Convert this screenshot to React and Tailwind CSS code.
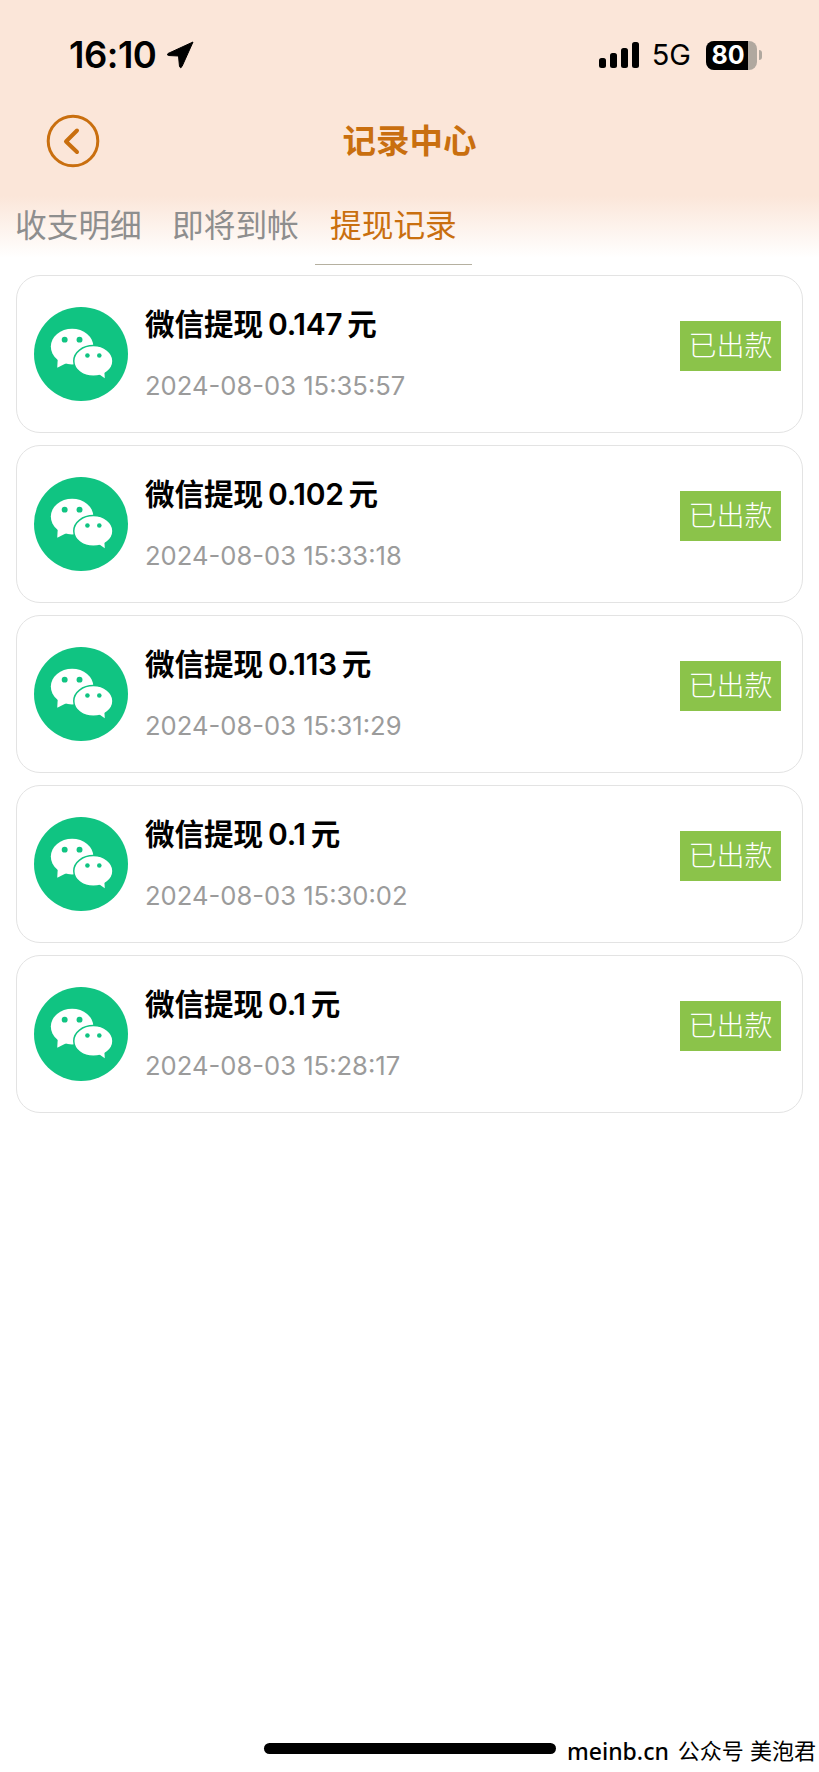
const CJK = '"Inter","Noto Sans CJK SC",sans-serif';

function WeChat() {
  return (
    <svg viewBox="0 0 95 95" className="w-[94px] h-[94px] shrink-0">
      <circle cx="47.500" cy="47.500" r="47.500" fill="#10c482" />
      <ellipse cx="38.500" cy="40" rx="21.500" ry="18" fill="#fff" />
      <path d="M24 52 L23.500 61.500 L34 56 Z" fill="#fff" />
      <ellipse cx="60" cy="54.500" rx="19.800" ry="15.500" fill="#fff" stroke="#10c482" strokeWidth="1.500" />
      <path d="M63 66 L71.500 72 L71 63 Z" fill="#fff" />
      <circle cx="31" cy="33" r="3" fill="#10c482" />
      <circle cx="46" cy="33" r="3" fill="#10c482" />
      <circle cx="54" cy="49" r="2.300" fill="#10c482" />
      <circle cx="66" cy="49" r="2.300" fill="#10c482" />
    </svg>
  );
}

function Row({ amount, time }) {
  return (
    <div className="h-[158px] rounded-[24px] border border-[#e3e3e3] bg-white flex items-center pl-[17px] pr-[21px]">
      <WeChat />
      <div className="ml-[17px] flex flex-col flex-1">
        <div className="-mt-[1px] text-[29.500px] leading-[38px] font-semibold text-black flex items-center gap-[5px]">
          <span>微信提现</span><span className="text-[30px] tracking-[-0.3px]">{amount}</span><span>元</span>
        </div>
        <div className="mt-[27px] text-[25.600px] leading-[32px] text-[#9b9b9b]">{time}</div>
      </div>
      <div className="mb-[16px] w-[101px] h-[50px] bg-[#8bc34a] text-white text-[28px] font-light flex items-center justify-center">已出款</div>
    </div>
  );
}

const rows = [
  ["0.147", "2024-08-03 15:35:57"],
  ["0.102", "2024-08-03 15:33:18"],
  ["0.113", "2024-08-03 15:31:29"],
  ["0.1", "2024-08-03 15:30:02"],
  ["0.1", "2024-08-03 15:28:17"],
];

export default function App() {
  return (
    <div className="w-[819px] h-[1772px] bg-white overflow-hidden flex flex-col" style={{ fontFamily: CJK }}>
      <div className="bg-[linear-gradient(to_bottom,#fbe6d9_0px,#fbe6d9_196px,#ffffff_258px)]">
        <div className="h-[112px] flex items-start pt-[32px] pl-[69px] pr-[57px]">
          <div className="flex items-center h-[46px] text-[36.500px] font-semibold text-black tracking-[-0.5px]">
            16:10
            <svg viewBox="0 0 28 28" className="w-[28px] h-[28px] ml-[10px]">
              <path d="M27 1 L2 12.500 Q0.500 14 2.500 14.500 L12.500 15 L13.500 25.500 Q14.500 28 16 25.500 Z" fill="#000" stroke="#000" strokeWidth="1" strokeLinejoin="round" />
            </svg>
          </div>
          <div className="ml-auto flex items-center h-[46px]">
            <svg viewBox="0 0 41 26" className="w-[41px] h-[26px]">
              <rect x="0" y="16" width="7" height="10" rx="2.500" fill="#000" />
              <rect x="11" y="11" width="7" height="15" rx="2.500" fill="#000" />
              <rect x="22" y="6" width="7" height="20" rx="2.500" fill="#000" />
              <rect x="33" y="0" width="7" height="26" rx="2.500" fill="#000" />
            </svg>
            <span className="ml-[12px] text-[29px] text-black">5G</span>
            <div className="ml-[15px] relative w-[51px] h-[29px] rounded-[8px] overflow-hidden bg-[#b0a89f]">
              <div className="w-[42px] h-full bg-black text-white text-[25px] font-bold leading-[29px] text-center pl-[2px]">80</div>
            </div>
            <div className="ml-[2px] w-[3px] h-[10px] rounded-r-[3px] bg-[#b0a89f]" />
          </div>
        </div>
        <div className="h-[58px] relative flex items-center justify-center">
          <svg viewBox="0 0 54 54" className="absolute left-[46px] top-[2px] w-[54px] h-[54px]">
            <circle cx="27" cy="27" r="24.800" fill="none" stroke="#c96f0f" strokeWidth="3" />
            <path d="M31 16.500 L20 27.500 L31 38" fill="none" stroke="#c96f0f" strokeWidth="4" strokeLinecap="round" strokeLinejoin="round" />
          </svg>
          <span className="text-[33.500px] font-bold text-[#c96f0f]">记录中心</span>
        </div>
        <div className="h-[95px] pt-[35px] flex text-[31.700px] leading-[42px] text-[#8e8e8e]">
          <div className="ml-[15px] w-[128px]">收支明细</div>
          <div className="ml-[29px] w-[128px]">即将到帐</div>
          <div className="ml-[15px] w-[157px] h-[60px] pl-[15px] text-[#c96f0f] border-b border-[#b5b0a0]">提现记录</div>
        </div>
      </div>
      <div className="mt-[10px] pl-[16px] pr-[16px] flex flex-col gap-[12px]">
        {rows.map((r) => <Row key={r[1]} amount={r[0]} time={r[1]} />)}
      </div>
      <div className="mt-auto mb-[6px] pl-[264px] flex items-center whitespace-nowrap">
        <div className="w-[292px] h-[11px] rounded-full bg-black shrink-0" />
        <div className="ml-[11px] mt-[5px] text-[23px] leading-[30px] text-black font-medium shrink-0" style={{ fontFamily: '"Noto Sans","Noto Sans CJK SC",sans-serif' }}>meinb.cn</div>
        <div className="ml-[9px] mt-[5px] text-[22px] leading-[30px] text-black shrink-0">公众号 美泡君</div>
      </div>
    </div>
  );
}
